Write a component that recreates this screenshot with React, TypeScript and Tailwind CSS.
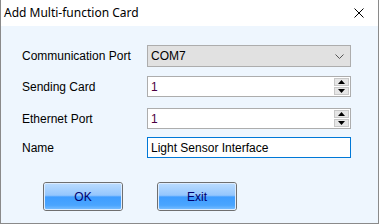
import React from "react";

function Spin() {
  return (
    <div className="flex flex-col gap-px mr-[1px] my-[1px]">
      <div className="w-[15px] h-[8px] bg-[#e6e6e6] border border-[#c8c8c8] flex items-center justify-center">
        <svg width="7" height="4" viewBox="0 0 7 4"><path d="M3.5 0 L7 4 L0 4 Z" fill="#000" /></svg>
      </div>
      <div className="w-[15px] h-[8px] bg-[#e6e6e6] border border-[#c8c8c8] flex items-center justify-center">
        <svg width="7" height="4" viewBox="0 0 7 4"><path d="M0 0 L7 0 L3.5 4 Z" fill="#000" /></svg>
      </div>
    </div>
  );
}

function Row({ label, children }: { label: string; children: React.ReactNode }) {
  return (
    <div className="flex items-center">
      <div className="w-[146px] shrink-0 pl-[21px] text-[12px] text-black whitespace-nowrap">{label}</div>
      {children}
    </div>
  );
}

function Btn({ label }: { label: string }) {
  return (
    <button className="w-[80px] h-[29px] shrink-0 rounded-[3px] border border-[#6f6f6f] p-0 bg-white">
      <div className="w-full h-full rounded-[2px] border border-[#dcecff] bg-[linear-gradient(to_bottom,#b9dbff_0%,#94c6fd_45%,#3f9dff_52%,#4aa5ff_85%,#74bbff_100%)] flex items-center justify-center text-[12px] text-[#00006e]">
        {label}
      </div>
    </button>
  );
}

export default function App() {
  return (
    <div
      className="w-[379px] h-[224px] flex flex-col border-l border-r border-b border-[#8a8a8a] bg-[#eef6fe] overflow-hidden"
      style={{ fontFamily: '"Liberation Sans", Arial, sans-serif' }}
    >
      <div className="h-[26px] shrink-0 bg-white flex items-center justify-between pl-[3px] pr-[14px]">
        <span className="text-[12px] text-black" style={{ fontFamily: '"Noto Sans", sans-serif' }}>
          Add Multi-function Card
        </span>
        <svg width="10" height="10" viewBox="0 0 10 10">
          <path d="M0.5 0.5 L9.5 9.5 M9.5 0.5 L0.5 9.5" stroke="#000" strokeWidth="1" />
        </svg>
      </div>
      <div className="flex flex-col pt-[19px]">
        <Row label="Communication Port">
          <div className="w-[204px] h-[22px] shrink-0 bg-[#e1e1e1] border border-[#adadad] flex items-center justify-between pl-[3px] pr-[6px] text-[12px]">
            <span>COM7</span>
            <svg width="9" height="5" viewBox="0 0 9 5"><path d="M0.5 0.5 L4.5 4.5 L8.5 0.5" stroke="#555" strokeWidth="1" fill="none" /></svg>
          </div>
        </Row>
        <div className="h-[9px]" />
        <Row label="Sending Card">
          <div className="w-[204px] h-[21px] shrink-0 bg-white border border-[#adadad] flex items-center justify-between pl-[3px] text-[12px]">
            <span className="text-[#4a0040]">1</span>
            <Spin />
          </div>
        </Row>
        <div className="h-[11px]" />
        <Row label="Ethernet Port">
          <div className="w-[204px] h-[21px] shrink-0 bg-white border border-[#adadad] flex items-center justify-between pl-[3px] text-[12px]">
            <span className="text-[#4a0040]">1</span>
            <Spin />
          </div>
        </Row>
        <div className="h-[8px]" />
        <Row label="Name">
          <div className="w-[204px] h-[21px] shrink-0 bg-white border border-[#0078d7] flex items-center pl-[3px] text-[12px]">
            <span>Light Sensor Interface</span>
          </div>
        </Row>
        <div className="flex gap-[34px] pl-[42px] pt-[24px]">
          <Btn label="OK" />
          <Btn label="Exit" />
        </div>
      </div>
    </div>
  );
}
